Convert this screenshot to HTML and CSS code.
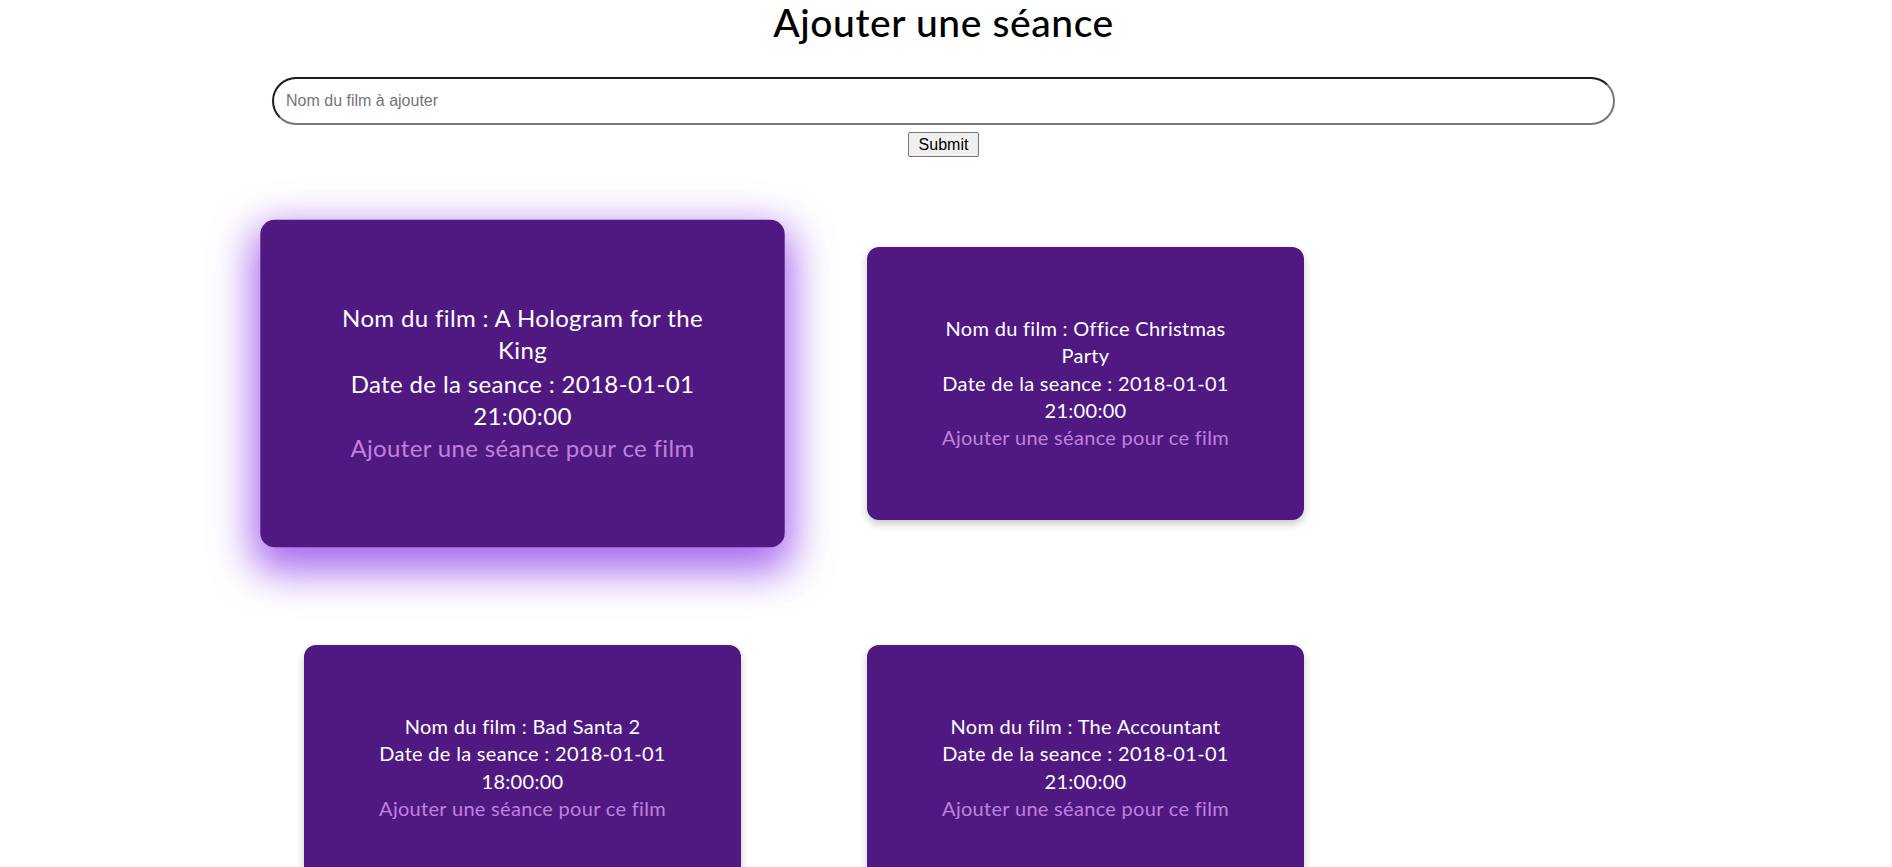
FILE: index.html
```html
<!DOCTYPE html>
<html lang="fr">
<head>
<meta charset="utf-8">
<title>Ajouter une séance</title>
<link rel="stylesheet" href="styles.css">
</head>
<body>
<main class="page">
  <h1 class="title">Ajouter une séance</h1>
  <form class="search">
    <input class="search-input" type="text" placeholder="Nom du film à ajouter">
    <button class="search-btn" type="button">Submit</button>
  </form>
  <div class="cards">
    <div class="card card-hover">
      <div class="card-text">Nom du film : A Hologram for the King</div>
      <div class="card-text">Date de la seance : 2018-01-01 21:00:00</div>
      <a class="card-link" href="#">Ajouter une séance pour ce film</a>
    </div>
    <div class="card">
      <div class="card-text">Nom du film : Office Christmas Party</div>
      <div class="card-text">Date de la seance : 2018-01-01 21:00:00</div>
      <a class="card-link" href="#">Ajouter une séance pour ce film</a>
    </div>
    <div class="card">
      <div class="card-text">Nom du film : Bad Santa 2</div>
      <div class="card-text">Date de la seance : 2018-01-01 18:00:00</div>
      <a class="card-link" href="#">Ajouter une séance pour ce film</a>
    </div>
    <div class="card">
      <div class="card-text">Nom du film : The Accountant</div>
      <div class="card-text">Date de la seance : 2018-01-01 21:00:00</div>
      <a class="card-link" href="#">Ajouter une séance pour ce film</a>
    </div>
  </div>
</main>
</body>
</html>
```
FILE: styles.css
```css
html, body {
  margin: 0;
  padding: 0;
  background: #ffffff;
}
body {
  font-family: Lato, "Noto Sans", sans-serif;
  color: #000;
  overflow: hidden;
}
.page {
  width: 1887px;
}
.title {
  margin: 0;
  text-align: center;
  font-size: 39px;
  font-weight: 500;
  letter-spacing: 0.6px;
  line-height: 44px;
}
.search {
  display: flex;
  flex-direction: column;
  align-items: center;
  margin-top: 33px;
  gap: 7px;
}
.search-input {
  box-sizing: border-box;
  width: 1343px;
  height: 48px;
  border-radius: 24px;
  border-width: 2px;
  border-style: solid;
  border-color: #1c1c1c #777777 #777777 #1c1c1c;
  padding: 0 12px;
  font-family: "Liberation Sans", Arial, sans-serif;
  font-size: 16px;
  color: #000;
  outline: none;
}
.search-input::placeholder {
  color: #757575;
}
.search-btn {
  box-sizing: border-box;
  height: 25px;
  padding: 1px 10px;
  font-family: "Liberation Sans", Arial, sans-serif;
  font-size: 16px;
  color: #000;
  background: #efefef;
  border: 1px solid #767676;
  border-radius: 2px;
}
.cards {
  display: grid;
  grid-template-columns: 437px 437px;
  column-gap: 126px;
  row-gap: 125px;
  margin-top: 90px;
  margin-left: 304px;
}
.card {
  box-sizing: border-box;
  min-height: 273px;
  background: #501982;
  border-radius: 12px;
  padding: 68px 66px;
  text-align: center;
  font-size: 20px;
  letter-spacing: 0.3px;
  line-height: 27.3px;
  color: #ffffff;
  box-shadow: 0 4px 9px rgba(0, 0, 0, 0.22);
}
.card-hover {
  transform: scale(1.2);
  box-shadow: 0 13px 34px 6px rgba(145, 65, 235, 0.8);
}
.card-link {
  display: block;
  color: #c081dc;
  text-decoration: none;
}
```
